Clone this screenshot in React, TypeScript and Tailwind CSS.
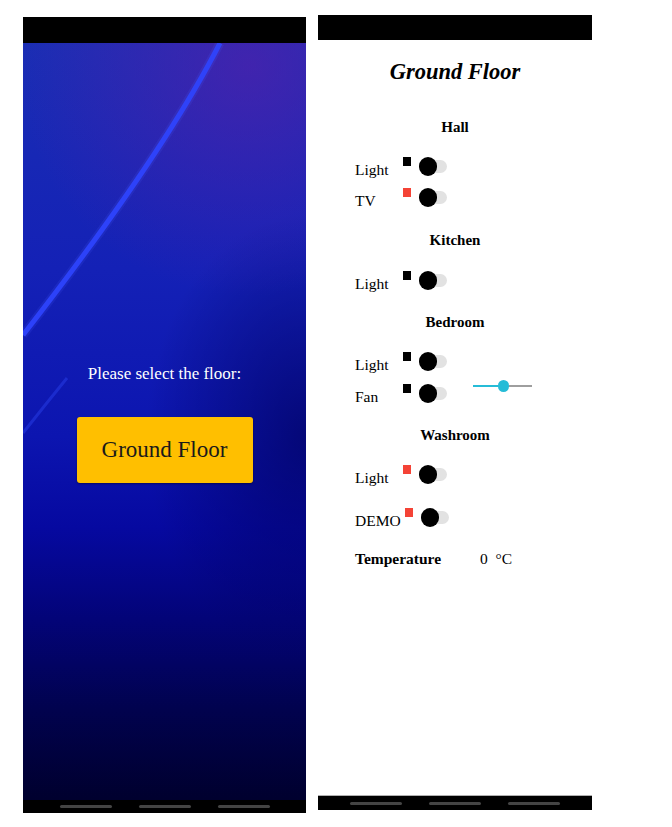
import React from 'react';

const serif = "font-['Liberation_Serif','DejaVu_Serif',serif]";

const NavBar = ({ className }: { className: string }) => (
  <div className={`flex items-center justify-center gap-[27px] bg-black ${className}`}>
    {[1, 2, 3].map((i) => (
      <div key={i} className="h-[3px] w-[52px] rounded-full bg-[#444]" />
    ))}
  </div>
);

const Toggle = ({ red, labelWidth = 'w-[48px]', label }: { red?: boolean; labelWidth?: string; label: string }) => (
  <div className="flex h-[30px] items-center">
    <span className={`${labelWidth} mt-[7px] shrink-0 text-[15.5px] text-black`}>{label}</span>
    <div className={`mb-[10px] h-[9px] w-[8px] shrink-0 ${red ? 'bg-[#f44336]' : 'bg-black'}`} />
    <div className="relative ml-[8px] h-[19px] w-[28px] shrink-0">
      <div className="absolute left-[4px] top-[3px] h-[13px] w-[24px] rounded-full bg-[#e2e2e2]" />
      <div className="absolute left-0 top-0 h-[19px] w-[18px] rounded-full bg-black" />
    </div>
  </div>
);

const Heading = ({ children, className = '' }: { children: React.ReactNode; className?: string }) => (
  <div className={`flex h-[22px] items-center justify-center text-[15px] font-bold text-black ${className}`}>
    {children}
  </div>
);

const FloorSelect = () => (
  <div className="mt-[17px] flex h-[796px] w-[283px] shrink-0 flex-col">
    <div className="h-[26px] bg-black" />
    <div className="relative flex-1 overflow-hidden bg-[radial-gradient(circle_at_80%_3%,rgba(90,30,170,0.6),rgba(60,20,160,0)_30%),radial-gradient(ellipse_at_100%_52%,rgba(0,0,90,0.65),rgba(0,0,90,0)_40%),linear-gradient(to_bottom,#1a2eb4,#1421b6_30%,#0c15b0_52%,#0609a0_64%,#030478_76%,#01024e_88%,#00002e)]">
      <svg className="pointer-events-none absolute inset-0" width="283" height="757" viewBox="0 0 283 757">
        <path d="M197 0 Q 140 112 0 292" stroke="#4a5cff" strokeWidth="9" fill="none" opacity="0.15" />
        <path d="M197 0 Q 140 112 0 292" stroke="#2f45ff" strokeWidth="5" fill="none" opacity="0.9" />
        <path d="M44 335 Q 22 362 0 390" stroke="#2438e0" strokeWidth="3" fill="none" opacity="0.6" />
      </svg>
      <div className={`relative flex flex-col items-center pt-[319px] ${serif}`}>
        <div className="flex h-[24px] items-center text-[17px] text-white">Please select the floor:</div>
        <button className="mt-[31px] flex h-[66px] w-[176px] items-center justify-center rounded-[3px] bg-[#ffbf00] text-[23px] text-[#1a1a1a] shadow-[0_1px_2px_rgba(0,0,0,0.4)]">
          Ground Floor
        </button>
      </div>
    </div>
    <NavBar className="h-[13px]" />
  </div>
);

const FloorPanel = () => (
  <div className="ml-[12px] mt-[15px] flex h-[795px] w-[274px] shrink-0 flex-col">
    <div className="h-[25px] bg-black" />
    <div className={`flex flex-1 flex-col bg-white ${serif}`}>
      <div className="mt-[16px] flex h-[32px] items-center justify-center text-[22.5px] font-bold italic text-black">
        Ground Floor
      </div>
      <Heading className="mt-[28px]">Hall</Heading>
      <div className="ml-[37px] mt-[13px] flex flex-col gap-[1px]">
        <Toggle label="Light" />
        <Toggle label="TV" red />
      </div>
      <Heading className="mt-[17px]">Kitchen</Heading>
      <div className="ml-[37px] mt-[14px]">
        <Toggle label="Light" />
      </div>
      <Heading className="mt-[16px]">Bedroom</Heading>
      <div className="ml-[37px] mt-[13px] flex">
        <div className="flex flex-col gap-[2px]">
          <Toggle label="Light" />
          <Toggle label="Fan" />
        </div>
        <div className="ml-[26px] mt-[34px] flex h-[12px] w-[59px] items-center">
          <div className="h-[2px] w-[25px] bg-[#26bcd7]" />
          <div className="h-[12px] w-[11px] shrink-0 rounded-full bg-[#26bcd7]" />
          <div className="h-[2px] flex-1 bg-[#9e9e9e]" />
        </div>
      </div>
      <Heading className="mt-[16px]">Washroom</Heading>
      <div className="ml-[37px] mt-[13px] flex flex-col gap-[13px]">
        <Toggle label="Light" red />
        <Toggle label="DEMO" red labelWidth="w-[50px]" />
      </div>
      <div className="ml-[37px] mt-[16px] flex h-[22px] items-center text-[15.5px] text-black">
        <span className="w-[125px] font-bold">Temperature</span>
        <span>0 &nbsp;°C</span>
      </div>
    </div>
    <div className="h-px bg-[#b0b0b0]" />
    <NavBar className="h-[14px]" />
  </div>
);

export default function App() {
  return (
    <div className="flex h-[827px] w-[672px] items-start bg-white pl-[23px]">
      <FloorSelect />
      <FloorPanel />
    </div>
  );
}
